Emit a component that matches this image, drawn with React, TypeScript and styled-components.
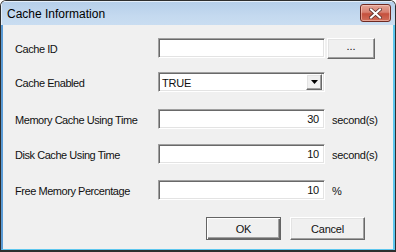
import React, { FC } from "react";
import styled, { createGlobalStyle } from "styled-components";

const GlobalStyle = createGlobalStyle`
  html, body {
    margin: 0;
    padding: 0;
    background: #ffffff;
  }
  * {
    box-sizing: border-box;
  }
`;

const Window = styled.div`
  width: 396px;
  height: 252px;
  display: flex;
  flex-direction: column;
  border: 1px solid #2e2e2e;
  border-bottom-width: 2px;
  border-radius: 6px 6px 0 0;
  overflow: hidden;
  font-family: "Liberation Sans", Arial, sans-serif;
  color: #000;
`;

const TitleBar = styled.div`
  height: 24px;
  flex: none;
  display: flex;
  align-items: flex-start;
  justify-content: space-between;
  background: linear-gradient(#b6cfea, #c4d9ef 60%, #c9ddf1);
  border-left: 1px solid #e4eef9;
  border-top: 1px solid #e4eef9;
`;

const Title = styled.div`
  font-size: 12px;
  line-height: 14px;
  padding: 5px 0 0 5px;
  color: #000;
`;

const CloseButton = styled.div`
  width: 31px;
  height: 18px;
  margin: 2px 4px 0 0;
  display: flex;
  align-items: center;
  justify-content: center;
  border: 1px solid #6e2a22;
  border-radius: 3px;
  background: linear-gradient(#e4a597, #d88070 45%, #c5503d 55%, #d06e5a);
  box-shadow: inset 0 0 0 1px rgba(255, 220, 210, 0.5);
`;

const Client = styled.div`
  flex: 1;
  display: flex;
  flex-direction: column;
  background: #f0f0f0;
  border-left: 2px solid #5b9bd5;
  border-right: 2px solid #5cc6ee;
  border-bottom: 1px solid #5cc6ee;
  padding: 13px 28px 0 12px;
  font-size: 11px;
  color: #101010;
`;

const Row = styled.div<{ $gap: number }>`
  display: flex;
  align-items: flex-start;
  height: 20px;
  margin-top: ${(p) => p.$gap}px;
`;

const Label = styled.div`
  flex: none;
  width: 143px;
  padding-top: 5px;
  white-space: nowrap;
  letter-spacing: -0.45px;
`;

const sunken = `
  border-style: solid;
  border-width: 1px;
  border-color: #a0a0a0 #ffffff #ffffff #a0a0a0;
  box-shadow: inset 1px 1px 0 #696969, inset -1px -1px 0 #e3e3e3;
  background: #ffffff;
`;

const raised = `
  border-style: solid;
  border-width: 1px;
  border-color: #ffffff #696969 #696969 #ffffff;
  box-shadow: inset -1px -1px 0 #a0a0a0, inset 1px 1px 0 #e3e3e3;
  background: #f0f0f0;
`;

const TextBox = styled.div<{ $align?: string }>`
  ${sunken}
  flex: none;
  width: 167px;
  height: 20px;
  padding: 3px 5px 0 3px;
  text-align: ${(p) => p.$align || "left"};
  line-height: 13px;
  letter-spacing: -0.2px;
`;

const Suffix = styled.div`
  flex: none;
  margin-left: 7px;
  padding-top: 5px;
  letter-spacing: -0.3px;
`;

const BrowseButton = styled.div`
  ${raised}
  flex: none;
  width: 48px;
  height: 21px;
  margin-left: 2px;
  text-align: center;
  line-height: 15px;
`;

const Combo = styled.div`
  ${sunken}
  flex: none;
  width: 167px;
  height: 20px;
  display: flex;
  align-items: center;
  justify-content: space-between;
  padding: 1px 2px 1px 2px;
  letter-spacing: -0.2px;
`;

const ComboValue = styled.div`
  padding: 1px 0 0 1px;
`;

const ArrowButton = styled.div`
  ${raised}
  width: 16px;
  height: 16px;
  display: flex;
  align-items: center;
  justify-content: center;
`;

const Footer = styled.div`
  display: flex;
  justify-content: flex-end;
  gap: 9px;
  margin-top: 17px;
`;

const DialogButton = styled.div<{ $default?: boolean }>`
  ${raised}
  width: 75px;
  height: 23px;
  display: flex;
  align-items: center;
  justify-content: center;
  letter-spacing: -0.2px;
  ${(p) =>
    p.$default &&
    `
    border-color: #646464;
    box-shadow: inset 1px 1px 0 #ffffff, inset -1px -1px 0 #696969, inset -2px -2px 0 #a0a0a0;
  `}
`;

const CloseIcon: FC = () => (
  <svg width="13" height="11" viewBox="0 0 13 11">
    <path d="M2 1.5 L11 9.5 M11 1.5 L2 9.5" stroke="#5a2f2a" strokeWidth="3.6" strokeLinecap="square" />
    <path d="M2 1.5 L11 9.5 M11 1.5 L2 9.5" stroke="#ffffff" strokeWidth="2" strokeLinecap="square" />
  </svg>
);

const App: FC = () => {
  return (
    <>
      <GlobalStyle />
      <Window>
        <TitleBar>
          <Title>Cache Information</Title>
          <CloseButton>
            <CloseIcon />
          </CloseButton>
        </TitleBar>
        <Client>
          <Row $gap={0}>
            <Label>Cache ID</Label>
            <TextBox />
            <BrowseButton>...</BrowseButton>
          </Row>
          <Row $gap={14}>
            <Label>Cache Enabled</Label>
            <Combo>
              <ComboValue>TRUE</ComboValue>
              <ArrowButton>
                <svg width="7" height="4" viewBox="0 0 7 4">
                  <path d="M0 0 H7 L3.5 4 Z" fill="#000" />
                </svg>
              </ArrowButton>
            </Combo>
          </Row>
          <Row $gap={17}>
            <Label>Memory Cache Using Time</Label>
            <TextBox $align="right">30</TextBox>
            <Suffix>second(s)</Suffix>
          </Row>
          <Row $gap={15}>
            <Label>Disk Cache Using Time</Label>
            <TextBox $align="right">10</TextBox>
            <Suffix>second(s)</Suffix>
          </Row>
          <Row $gap={16}>
            <Label>Free Memory Percentage</Label>
            <TextBox $align="right">10</TextBox>
            <Suffix>%</Suffix>
          </Row>
          <Footer>
            <DialogButton $default>OK</DialogButton>
            <DialogButton>Cancel</DialogButton>
          </Footer>
        </Client>
      </Window>
    </>
  );
};

export default App;
